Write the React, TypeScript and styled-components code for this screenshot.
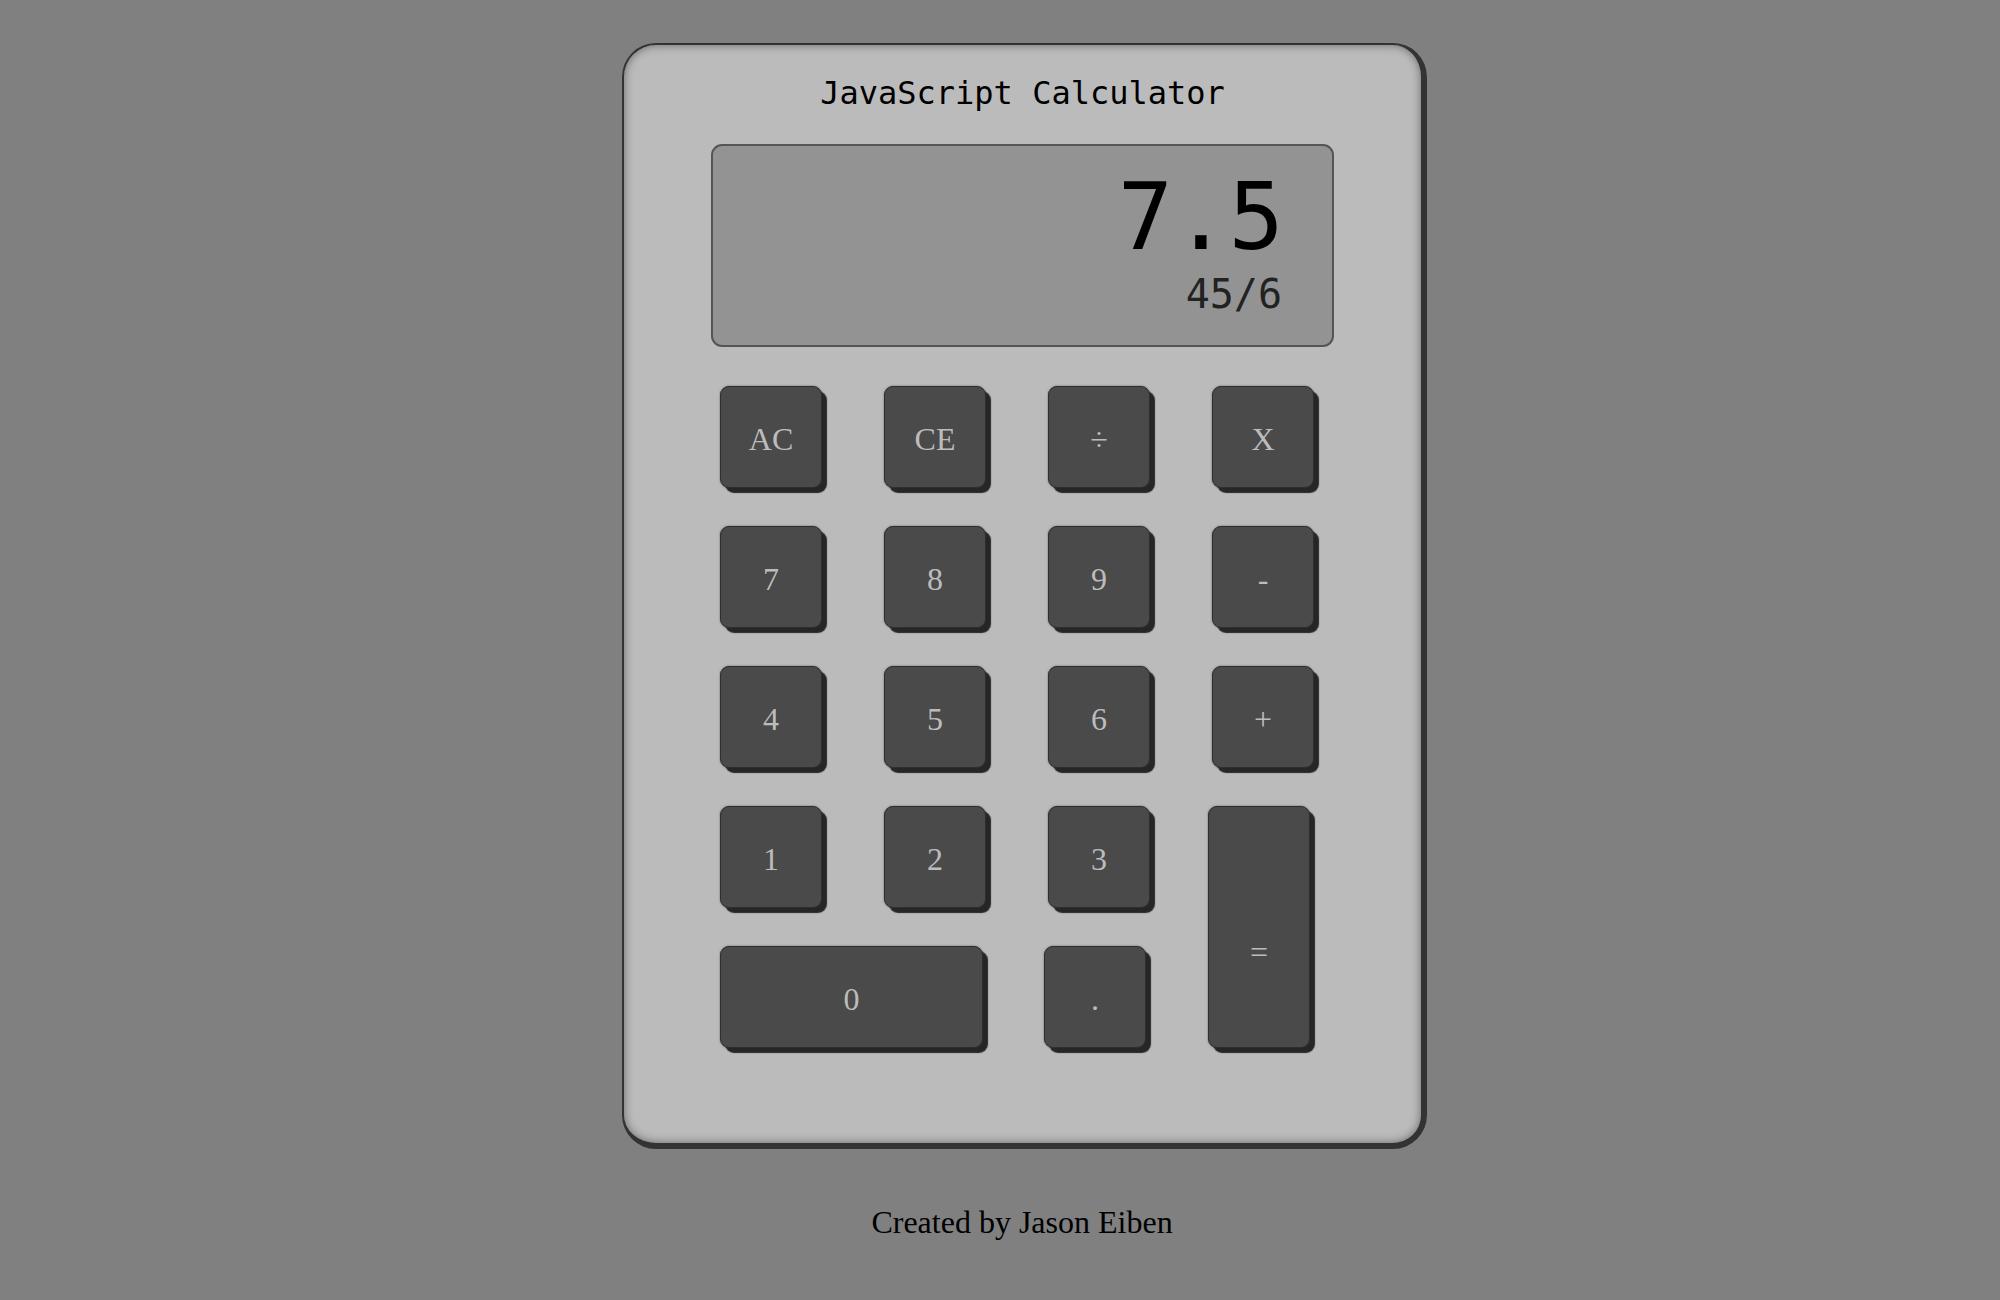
import React from "react";
import styled, { createGlobalStyle } from "styled-components";

const GlobalStyle = createGlobalStyle`
  html, body {
    margin: 0;
    padding: 0;
    background: #808080;
  }
  * { box-sizing: border-box; }
`;

const Page = styled.div`
  min-height: 1300px;
  display: flex;
  flex-direction: column;
  align-items: center;
  padding: 43px 0 0 49px;
`;

const Calculator = styled.div`
  width: 805px;
  height: 1106px;
  background: #bbbbbb;
  border: 2px solid #333333;
  border-right-width: 6px;
  border-bottom-width: 6px;
  border-radius: 34px;
  box-shadow: inset 0 0 10px rgba(0, 0, 0, 0.45);
  display: flex;
  flex-direction: column;
  align-items: center;
  padding-top: 30px;
`;

const Title = styled.h1`
  margin: 0;
  font-family: "DejaVu Sans Mono", monospace;
  font-weight: normal;
  font-size: 32px;
  line-height: 37px;
  color: #000;
`;

const Display = styled.div`
  margin-top: 32px;
  width: 623px;
  height: 203px;
  background: #939393;
  border: 2px solid #555555;
  border-radius: 11px;
  padding: 26px 49px 0 0;
  display: flex;
  flex-direction: column;
  align-items: flex-end;
  gap: 10px;
  font-family: "DejaVu Sans Mono", monospace;
`;

const MainValue = styled.div`
  font-size: 92px;
  line-height: 92px;
  color: #000;
  margin-right: -1px;
`;

const SubValue = styled.div`
  font-size: 40px;
  line-height: 40px;
  color: #222;
  margin-right: 1px;
`;

const Keypad = styled.div`
  align-self: stretch;
  margin-top: 39px;
  padding-left: 96px;
  display: grid;
  grid-template-columns: repeat(4, 102px);
  grid-auto-rows: 102px;
  column-gap: 62px;
  row-gap: 38px;
`;

const Key = styled.button<{ $wide?: boolean; $tall?: boolean; $shift?: boolean }>`
  display: flex;
  align-items: center;
  justify-content: center;
  width: ${(p) => (p.$wide ? "263px" : "102px")};
  ${(p) => (p.$wide ? "grid-column: span 2;" : "")}
  ${(p) =>
    p.$tall
      ? "grid-row: span 2; height: auto; padding-top: 50px;"
      : "height: 102px; padding-top: 3px;"}
  margin-left: ${(p) => (p.$shift ? "-4px" : "0")};
  background: #4a4a4a;
  border: 1px solid #2e2e2e;
  border-radius: 9px;
  box-shadow: 5px 5px 1px #262626, 0 0 2px rgba(0, 0, 0, 0.5);
  color: #bcbcbc;
  font-family: "Liberation Serif", "Times New Roman", serif;
  font-size: 32px;
  line-height: 1;
  padding-left: 0;
  padding-right: 0;
  padding-bottom: 0;
  cursor: pointer;
`;

const Footer = styled.p`
  margin: 55px 5px 0 0;
  font-family: "Liberation Serif", "Times New Roman", serif;
  font-size: 32px;
  color: #000;
`;

type KeyDef = { label: string; wide?: boolean; tall?: boolean; shift?: boolean };

const keys: KeyDef[] = [
  { label: "AC" },
  { label: "CE" },
  { label: "÷" },
  { label: "X" },
  { label: "7" },
  { label: "8" },
  { label: "9" },
  { label: "-" },
  { label: "4" },
  { label: "5" },
  { label: "6" },
  { label: "+" },
  { label: "1" },
  { label: "2" },
  { label: "3" },
  { label: "=", tall: true, shift: true },
  { label: "0", wide: true },
  { label: ".", shift: true },
];

export default function App() {
  return (
    <>
      <GlobalStyle />
      <Page>
        <Calculator>
          <Title>JavaScript Calculator</Title>
          <Display>
            <MainValue>7.5</MainValue>
            <SubValue>45/6</SubValue>
          </Display>
          <Keypad>
            {keys.map((k) => (
              <Key key={k.label} $wide={k.wide} $tall={k.tall} $shift={k.shift}>
                {k.label}
              </Key>
            ))}
          </Keypad>
        </Calculator>
        <Footer>Created by Jason Eiben</Footer>
      </Page>
    </>
  );
}
